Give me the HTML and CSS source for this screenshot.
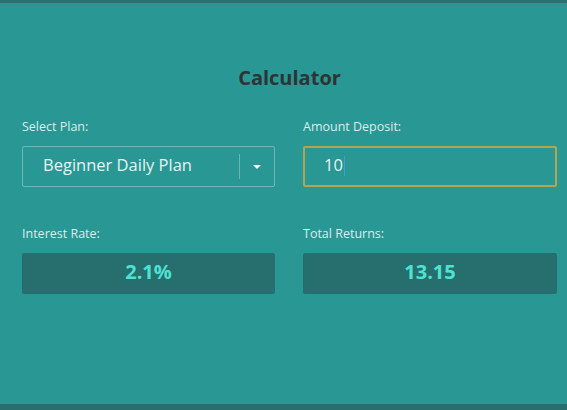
FILE: index.html
```html
<!DOCTYPE html>
<html>
<head>
<meta charset="utf-8">
<link rel="stylesheet" href="styles.css">
</head>
<body>
<div class="page">
  <div class="topbar"></div>
  <main class="main">
    <h1 class="title">Calculator</h1>
    <div class="grid">
      <div class="field">
        <label class="label">Select Plan:</label>
        <div class="select">
          <span class="select-text">Beginner Daily Plan</span>
          <span class="select-sep"></span>
          <span class="select-arrow"></span>
        </div>
      </div>
      <div class="field">
        <label class="label">Amount Deposit:</label>
        <div class="input"><span class="input-text">10</span><span class="cursor"></span></div>
      </div>
      <div class="field">
        <label class="label">Interest Rate:</label>
        <div class="value">2.1%</div>
      </div>
      <div class="field">
        <label class="label">Total Returns:</label>
        <div class="value">13.15</div>
      </div>
    </div>
  </main>
  <div class="bottombar"></div>
</div>
</body>
</html>
```

FILE: styles.css
```css
* { box-sizing: border-box; }
html, body { margin: 0; padding: 0; }
body {
  width: 567px;
  height: 410px;
  overflow: hidden;
  font-family: "Open Sans", "Noto Sans", sans-serif;
  background: #299794;
}
.page {
  height: 410px;
  display: flex;
  flex-direction: column;
}
.topbar { height: 3px; background: #2a7170; }
.bottombar { height: 6px; background: #286f6d; }
.main {
  flex: 1;
  padding: 63px 10px 0 22px;
}
.title {
  margin: 0 0 29px;
  width: 535px;
  text-align: center;
  font-size: 20px;
  line-height: 24px;
  font-weight: 700;
  color: #2e3434;
}
.grid {
  width: 535px;
  display: grid;
  grid-template-columns: 253px 254px;
  column-gap: 28px;
  row-gap: 39px;
}
.field { display: flex; flex-direction: column; }
.label {
  font-size: 12.5px;
  line-height: 16px;
  color: #d9eeed;
  margin-bottom: 11px;
}
.select {
  height: 41px;
  border: 1px solid rgba(255,255,255,0.32);
  border-radius: 2px;
  display: flex;
  align-items: center;
  padding-left: 20px;
}
.select-text {
  flex: 1;
  font-size: 16.5px;
  line-height: 22px;
  margin-bottom: 3px;
  color: #e6f4f3;
}
.select-sep {
  width: 1px;
  height: 25px;
  background: rgba(255,255,255,0.3);
}
.select-arrow {
  width: 34px;
  display: flex;
  justify-content: center;
}
.select-arrow::before {
  content: "";
  border-left: 4px solid transparent;
  border-right: 4px solid transparent;
  border-top: 4px solid #ffffff;
}
.input {
  height: 41px;
  border: 2px solid #b3a54f;
  border-radius: 2px;
  display: flex;
  align-items: center;
  padding-left: 19px;
}
.input-text {
  font-size: 16.5px;
  line-height: 22px;
  margin-bottom: 3px;
  color: #e6f4f3;
}
.cursor {
  width: 1px;
  height: 20px;
  margin-left: 1px;
  margin-bottom: 2px;
  background: #3aa2d6;
}
.value {
  height: 41px;
  padding-bottom: 4px;
  background: #276f6e;
  border-radius: 2px;
  display: flex;
  align-items: center;
  justify-content: center;
  font-size: 20px;
  font-weight: 700;
  color: #4ee2d2;
}
```
